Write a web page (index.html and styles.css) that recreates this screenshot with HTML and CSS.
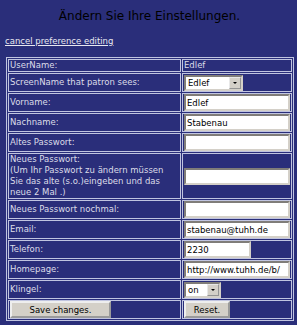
FILE: index.html
```html
<!DOCTYPE html>
<html lang="de">
<head>
    <meta charset="UTF-8">
    <title>Einstellungen</title>
    <link rel="stylesheet" href="styles.css">
</head>
<body>
    <div class="title">Ändern Sie Ihre Einstellungen.</div>
    <a class="cancel" href="#">cancel preference editing</a>

    <form class="prefs">
        <table class="prefs-table">
            <tr class="text-row">
                <td class="label">UserName:</td>
                <td class="value">Edlef</td>
            </tr>
            <tr>
                <td class="label">ScreenName that patron sees:</td>
                <td class="value">
                    <span class="select-wrap sel-name">
                        <select name="screenname">
                            <option>Edlef</option>
                            <option>Stabenau</option>
                        </select>
                        <span class="arrow"></span>
                    </span>
                </td>
            </tr>
            <tr>
                <td class="label">Vorname:</td>
                <td class="value"><input type="text" value="Edlef"></td>
            </tr>
            <tr>
                <td class="label">Nachname:</td>
                <td class="value"><input type="text" value="Stabenau"></td>
            </tr>
            <tr>
                <td class="label">Altes Passwort:</td>
                <td class="value"><input type="password"></td>
            </tr>
            <tr>
                <td class="label">Neues Passwort:<br>(Um Ihr Passwort zu ändern müssen<br>Sie das alte (s.o.)eingeben und das<br>neue 2 Mal .)</td>
                <td class="value"><input type="password"></td>
            </tr>
            <tr>
                <td class="label">Neues Passwort nochmal:</td>
                <td class="value"><input type="password"></td>
            </tr>
            <tr>
                <td class="label">Email:</td>
                <td class="value"><input type="text" value="stabenau@tuhh.de"></td>
            </tr>
            <tr>
                <td class="label">Telefon:</td>
                <td class="value"><input type="text" class="short" value="2230"></td>
            </tr>
            <tr>
                <td class="label">Homepage:</td>
                <td class="value"><input type="text" value="http://www.tuhh.de/b/"></td>
            </tr>
            <tr>
                <td class="label">Klingel:</td>
                <td class="value">
                    <span class="select-wrap sel-bell">
                        <select name="bell">
                            <option>on</option>
                            <option>off</option>
                        </select>
                        <span class="arrow"></span>
                    </span>
                </td>
            </tr>
            <tr>
                <td class="label"><button type="submit" class="save">Save changes.</button></td>
                <td class="value"><button type="reset" class="reset">Reset.</button></td>
            </tr>
        </table>
    </form>
</body>
</html>
```

FILE: styles.css
```css
body {
    margin: 0;
    padding: 0 4px 0 6px;
    background-color: #2a2e7a;
    font-family: "DejaVu Sans", Verdana, sans-serif;
    font-size: 8.5px;
    color: #dcdce8;
}

.title {
    padding-top: 9px;
    text-align: center;
    font-size: 12px;
    line-height: 14px;
    color: #000;
}

.cancel {
    display: block;
    margin-top: 13px;
    margin-left: -1px;
    line-height: 11px;
    color: #e8e8f0;
}

.prefs {
    margin: 10px 0 0 0;
}

.prefs-table {
    width: 288px;
    border: 1px solid #c0c4e0;
    border-spacing: 1px;
}

.prefs-table td {
    border: 1px solid #c0c4e0;
    padding: 0 1px;
    line-height: 11px;
    height: 17px;
    vertical-align: middle;
}

.prefs-table .text-row td {
    height: 11px;
}

.label {
    width: 171px;
}

input[type="text"], input[type="password"] {
    box-sizing: border-box;
    width: 106px;
    height: 17px;
    margin: 0;
    padding: 0 1px;
    font-family: "DejaVu Sans", Verdana, sans-serif;
    font-size: 8.5px;
    color: #000;
    background-color: #fff;
    border: 2px inset #d4d0c8;
    vertical-align: middle;
}

input.short {
    width: 67px;
}

.select-wrap {
    position: relative;
    display: inline-block;
    vertical-align: middle;
}

.select-wrap select {
    appearance: none;
    -webkit-appearance: none;
    box-sizing: border-box;
    height: 16px;
    margin: 0;
    padding: 0 2px;
    font-family: "DejaVu Sans", Verdana, sans-serif;
    font-size: 8.5px;
    color: #000;
    background-color: #fff;
    border: 2px inset #d4d0c8;
    border-radius: 0;
    display: block;
}

.sel-name select {
    width: 59px;
}

.sel-bell select {
    width: 37px;
}

.arrow {
    position: absolute;
    top: 2px;
    right: 2px;
    width: 12px;
    height: 12px;
    box-sizing: border-box;
    background-color: #d4d0c8;
    border: 1px outset #e8e8e8;
}

.arrow::after {
    content: "";
    position: absolute;
    left: 3px;
    top: 4px;
    border-left: 2px solid transparent;
    border-right: 2px solid transparent;
    border-top: 2px solid #000;
}

button {
    height: 17px;
    margin: 0;
    padding: 0;
    font-family: "DejaVu Sans", Verdana, sans-serif;
    font-size: 8.5px;
    color: #000;
    background-color: #d4d0c8;
    border: 2px outset #eeeeee;
    vertical-align: middle;
}

.save {
    width: 101px;
}

.reset {
    width: 46px;
}
```
